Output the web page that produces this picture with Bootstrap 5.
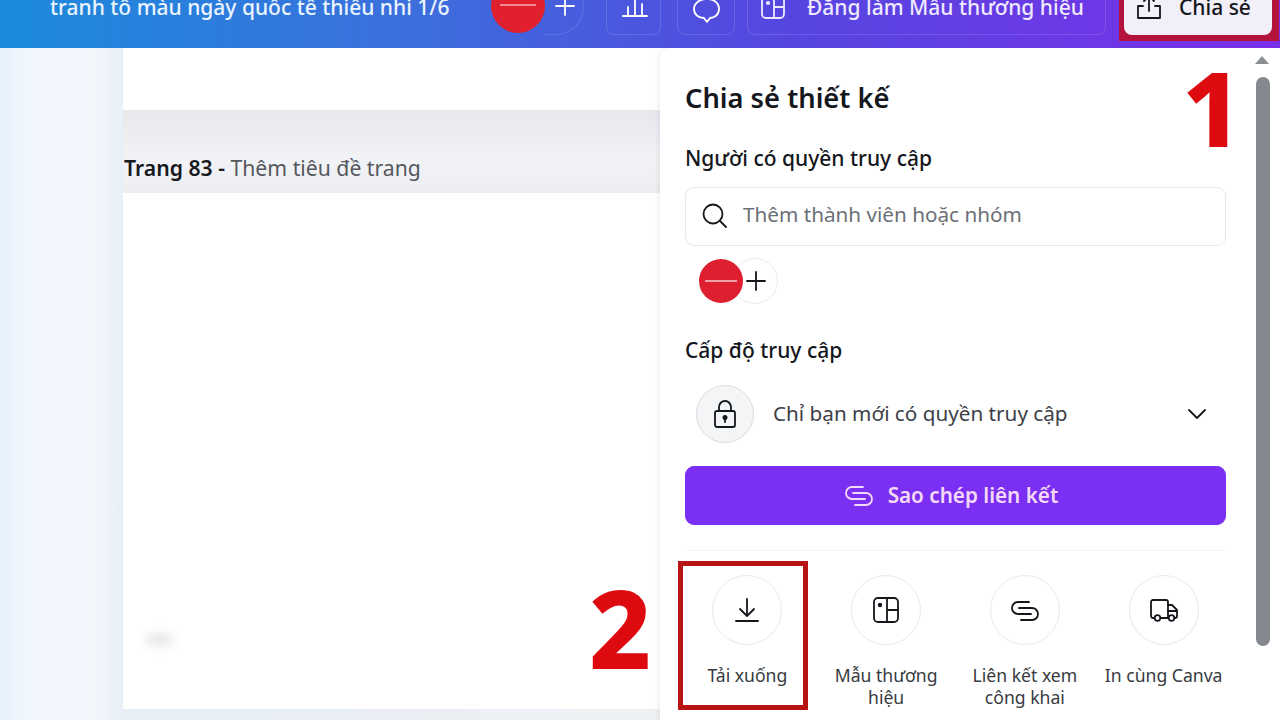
<!DOCTYPE html>
<html lang="vi">
<head>
  <meta charset="UTF-8">
  <title>Chia sẻ thiết kế</title>
  <link href="https://cdn.jsdelivr.net/npm/bootstrap@5.3.3/dist/css/bootstrap.min.css" rel="stylesheet">
  <style>
    html, body { height: 720px; overflow: hidden; }
    body { font-family: "Noto Sans", "Open Sans", sans-serif; color: #14171c; background: #fff; }
    svg { display: block; flex: none; fill: none; stroke: currentColor; stroke-width: 1.8; stroke-linecap: round; stroke-linejoin: round; }

    /* thanh tren */
    .topbar { height: 48px; flex: none; background: linear-gradient(90deg, #1b8bdc 0%, #3c6fdc 32%, #5447e0 60%, #7a2fe8 100%); color: #fff; padding-left: 50px; overflow: hidden; position: relative; z-index: 2; }
    .doc-title { font-size: 21px; font-weight: 500; line-height: 24px; width: 441px; margin-top: -5px; white-space: nowrap; color: #eaf4ff; flex: none; }
    .avatar-top { width: 54px; height: 54px; margin-top: -21px; border-radius: 50%; background: #e0202c; flex: none; position: relative; z-index: 1; }
    .avatar-top::after { content: ""; position: absolute; left: 9px; right: 9px; top: 25px; height: 2px; background: #f28a94; }
    .plus-top { width: 40px; height: 56px; margin-top: -21px; margin-left: -1px; border: 1px solid rgba(255,255,255,.12); border-left: 0; border-radius: 0 28px 28px 0; padding: 15px 0 0 10px; flex: none; }
    .bar-btn { height: 56px; margin-top: -21px; border: 1px solid rgba(255,255,255,.14); border-radius: 8px; flex: none; padding-top: 17px; }
    .bar-stats { width: 55px; margin-left: 22px; padding-left: 15px; }
    .bar-chat { width: 58px; margin-left: 16px; padding-left: 14px; }
    .bar-brand { width: 359px; margin-left: 12px; padding-left: 12px; font-size: 21px; font-weight: 500; line-height: 24px; padding-top: 15px; gap: 21px; color: #eee9ff; white-space: nowrap; }
    .share-frame { width: 160px; height: 41px; margin-left: 13px; background: #b3123c; padding: 0 7px 6px 5px; flex: none; }
    .share-btn { height: 35px; background: #f3eff9; border-radius: 0 0 8px 8px; color: #14171c; font-size: 21px; font-weight: 500; line-height: 24px; padding-left: 11px; gap: 16px; white-space: nowrap; }
    .share-btn svg { margin-top: -7px; }
    .share-btn span { margin-top: -5px; }

    /* vung trang */
    .stage { flex: 1; min-height: 0; position: relative; }
    .canvas-side { width: 660px; flex: none; padding-left: 123px; background: linear-gradient(90deg, #e6f1fc 0%, #f1f7fc 30px, #f1f6fb 100px, #e8eff7 123px, #eef0f3 660px); }
    .sheet-top { height: 62px; background: #fff; }
    .page-title { height: 83px; padding: 44px 0 0 1px; font-size: 21.2px; line-height: 27px; color: #55585e; white-space: nowrap; background: linear-gradient(180deg, #e6e8ec 0%, #f1f3f6 60%, #eceef1 100%); }
    .page-title b { color: #17191d; font-weight: 600; }
    .sheet-main { height: 516px; background: #fff; position: relative; }
    .smudge { position: absolute; left: 22px; top: 441px; width: 30px; height: 12px; border-radius: 50%; background: #e6e6e6; filter: blur(5px); }

    /* bang chia se */
    .share-panel { width: 620px; flex: none; background: #fff; border-top-left-radius: 10px; padding: 0 54px 0 25px; box-shadow: -2px 0 5px rgba(40,50,70,.08); position: relative; }
    .panel-title { font-size: 27.3px; font-weight: 600; line-height: 34px; margin: 33px 0 0; }
    .panel-label { font-size: 21px; font-weight: 500; line-height: 27px; margin: 30px 0 0; }
    .label-level { margin-top: 33px; }
    .member-box { height: 59px; border: 1px solid #e6e7ea; border-radius: 9px; padding-left: 13px; gap: 14px; font-size: 20.7px; color: #6b6f76; margin-top: 15px; }
    .member-box span { margin-top: -4px; }
    .member-box svg { color: #14171c; margin-top: -2px; }
    .member-add { height: 46px; margin: 12px 0 0 14px; }
    .avatar-red { width: 44px; height: 44px; border-radius: 50%; background: #dd1f30; flex: none; position: relative; z-index: 1; }
    .avatar-red::after { content: ""; position: absolute; left: 6px; right: 6px; top: 21px; height: 2px; background: #f0a0a6; }
    .add-ring { width: 46px; height: 46px; margin-left: -11px; border: 1px solid #e9eaec; border-radius: 50%; padding-left: 12px; flex: none; }
    .access-row { height: 60px; margin-top: 20px; padding: 0 19px 0 11px; gap: 19px; font-size: 20.7px; color: #3d4047; }
    .access-row svg { color: #14171c; }
    .lock-ring { width: 58px; height: 58px; border-radius: 50%; border: 1px solid #dadce0; background: #f4f5f6; flex: none; }
    .copy-btn { height: 59px; margin-top: 22px; padding-right: 22px; background: #7b2ff2; border-color: #7b2ff2; color: #f3d9f7; font-size: 20.7px; font-weight: 600; border-radius: 9px; gap: 13px; }
    .panel-rule { height: 1px; background: #f2f3f4; margin-top: 25px; }
    .action-grid { margin: 24px -7px 0 -7px; }
    .action-ring { width: 70px; height: 70px; border-radius: 50%; border: 1px solid #e8e9eb; margin: 0 auto 19px; }
    .action-ring svg { color: #14171c; }
    .action-cell { font-size: 17.6px; line-height: 22px; color: #383b41; padding: 0; white-space: nowrap; }

    /* thanh cuon */
    .scroll-arrow { position: absolute; left: 595px; top: 8px; width: 0; height: 0; border: 7px solid transparent; border-top: 0; border-bottom: 8px solid #8a8d92; }
    .scroll-thumb { position: absolute; left: 596px; top: 29px; width: 14px; height: 569px; border-radius: 7px; background: #85888e; }

    /* chu thich do */
    .note-num { position: absolute; font-family: "Noto Sans", sans-serif; font-weight: 800; color: #dd0a10; line-height: 1; }
    .note-one { left: 1182px; top: 55px; font-size: 104px; }
    .note-two { left: 589px; top: 574px; font-size: 108px; }
    .note-box { position: absolute; left: 678px; top: 561px; width: 130px; height: 149px; border: 5px solid #b81414; }
  </style>
</head>
<body class="d-flex flex-column">

  <div class="topbar d-flex">
    <div class="doc-title">tranh tô màu ngày quốc tế thiếu nhi 1/6</div>
    <div class="avatar-top"></div>
    <div class="plus-top">
      <svg width="22" height="22" viewBox="0 0 22 22"><path d="M11 2v18M2 11h18"/></svg>
    </div>
    <div class="bar-btn bar-stats">
      <svg width="26" height="20" viewBox="0 0 26 20"><path d="M1 19h24M6 19V10M13 19V2M20 19V7"/></svg>
    </div>
    <div class="bar-btn bar-chat">
      <svg width="30" height="26" viewBox="0 0 30 26"><path d="M15 2c7 0 12 4 12 10s-5 9-9 9l-3 4-3-4c-5 0-10-3-10-9S8 2 15 2z"/></svg>
    </div>
    <div class="bar-btn bar-brand d-flex">
      <svg width="26" height="24" viewBox="0 0 26 24"><rect x="2" y="1" width="22" height="22" rx="4"/><path d="M14 1v22M14 12h10"/><circle cx="8" cy="8" r="1.2" fill="currentColor"/></svg>
      <span>Đăng làm Mẫu thương hiệu</span>
    </div>
    <div class="share-frame">
      <div class="share-btn d-flex align-items-start">
        <svg width="28" height="28" viewBox="0 0 28 28"><path d="M14 18V4M9 8l5-5 5 5M8 13H3v12h22V13h-5"/></svg>
        <span>Chia sẻ</span>
      </div>
    </div>
  </div>

  <div class="stage d-flex">
    <div class="canvas-side">
      <div class="sheet-top"></div>
      <div class="page-title"><b>Trang 83 -</b> Thêm tiêu đề trang</div>
      <div class="sheet-main"><div class="smudge"></div></div>
    </div>

    <div class="share-panel">
      <h2 class="panel-title">Chia sẻ thiết kế</h2>
      <p class="panel-label">Người có quyền truy cập</p>
      <div class="member-box d-flex align-items-center">
        <svg width="30" height="30" viewBox="0 0 30 30" stroke-width="2"><circle cx="14" cy="13" r="9.5"/><path d="M21 20l6 6"/></svg>
        <span>Thêm thành viên hoặc nhóm</span>
      </div>
      <div class="member-add d-flex align-items-center">
        <div class="avatar-red"></div>
        <div class="add-ring d-flex align-items-center">
          <svg width="22" height="22" viewBox="0 0 22 22"><path d="M11 2v18M2 11h18"/></svg>
        </div>
      </div>
      <p class="panel-label label-level">Cấp độ truy cập</p>
      <div class="access-row d-flex align-items-center">
        <div class="lock-ring d-flex align-items-center justify-content-center">
          <svg width="28" height="30" viewBox="0 0 28 30" stroke-width="2"><rect x="4" y="12" width="20" height="16" rx="2"/><path d="M8 12V8a6 6 0 0 1 12 0v4"/><circle cx="14" cy="18.5" r="1.6" fill="currentColor"/><path d="M14 19v4"/></svg>
        </div>
        <span class="flex-grow-1">Chỉ bạn mới có quyền truy cập</span>
        <svg width="20" height="12" viewBox="0 0 20 12" stroke-width="2"><path d="M2 2l8 8 8-8"/></svg>
      </div>
      <button type="button" class="btn copy-btn w-100 d-flex align-items-center justify-content-center">
        <svg width="32" height="23" viewBox="0 0 32 23"><path d="M20 3H9a6 6 0 0 0 0 12h13"/><path d="M10 9h13a6 6 0 0 1 0 12H12"/></svg>
        <span>Sao chép liên kết</span>
      </button>
      <div class="panel-rule"></div>
      <div class="row g-0 action-grid text-center">
        <div class="col-3 action-cell">
          <div class="action-ring d-flex align-items-center justify-content-center">
            <svg width="28" height="28" viewBox="0 0 28 28"><path d="M14 3v17M7 13l7 7 7-7M3 25h22"/></svg>
          </div>
          Tải xuống
        </div>
        <div class="col-3 action-cell">
          <div class="action-ring d-flex align-items-center justify-content-center">
            <svg width="28" height="28" viewBox="0 0 28 28" stroke-width="2"><rect x="2" y="2" width="24" height="24" rx="4"/><path d="M15 2v24M15 14h11"/><circle cx="8" cy="9" r="1.3" fill="currentColor"/></svg>
          </div>
          Mẫu thương<br>hiệu
        </div>
        <div class="col-3 action-cell">
          <div class="action-ring d-flex align-items-center justify-content-center">
            <svg width="32" height="23" viewBox="0 0 32 23" stroke-width="2"><path d="M20 3H9a6 6 0 0 0 0 12h13"/><path d="M10 9h13a6 6 0 0 1 0 12H12"/></svg>
          </div>
          Liên kết xem<br>công khai
        </div>
        <div class="col-3 action-cell">
          <div class="action-ring d-flex align-items-center justify-content-center">
            <svg width="30" height="26" viewBox="0 0 30 26" stroke-width="2"><path d="M5 21H4a2 2 0 0 1-2-2V5a2 2 0 0 1 2-2h13a2 2 0 0 1 2 2v16h-7"/><path d="M19 8h4l5 5v6a2 2 0 0 1-2 2M19 14h9"/><circle cx="8.5" cy="21" r="2.8"/><circle cx="22.5" cy="21" r="2.8"/></svg>
          </div>
          In cùng Canva
        </div>
      </div>
      <div class="scroll-arrow"></div>
      <div class="scroll-thumb"></div>
    </div>
  </div>

  <div class="note-num note-one">1</div>
  <div class="note-num note-two">2</div>
  <div class="note-box"></div>

  <script src="https://cdn.jsdelivr.net/npm/bootstrap@5.3.3/dist/js/bootstrap.bundle.min.js"></script>
</body>
</html>
